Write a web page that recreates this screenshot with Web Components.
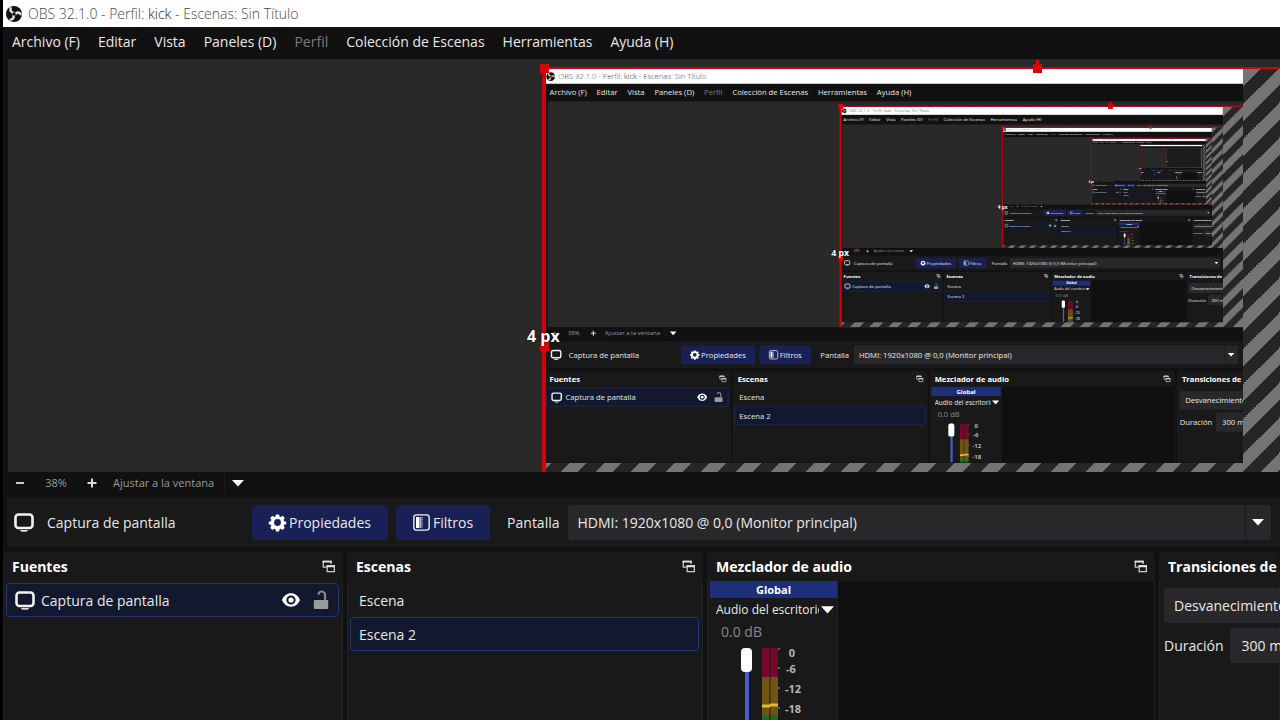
<!DOCTYPE html>
<html lang="es">
<head>
<meta charset="utf-8">
<meta name="viewport" content="width=device-width, initial-scale=1">
<title>OBS 32.1.0 - Perfil: kick - Escenas: Sin Título</title>
<style>
  html, body { height: 100%; }
  body {
    margin: 0;
    background: #000;
    overflow: hidden;
  }
</style>
</head>
<body>
<obs-window depth="5"></obs-window>

<script>
const html = (strings, ...expressions) => {
  const template = document.createElement('template')
  template.innerHTML = strings.reduce((result, str, i) => result + str + (expressions[i] ?? ''), '')
  return template
}

/** Base class: opens a shadow root and clones the static template into it. */
class ObsElement extends HTMLElement {
  constructor() {
    super()
    this.attachShadow({ mode: 'open' })
    this.shadowRoot.appendChild(document.importNode(this.constructor.template.content, true))
  }

  $(selector) {
    return this.shadowRoot.querySelector(selector)
  }
}

/** Icons, picked with the name attribute. */
class ObsIcon extends ObsElement {
  static template = html`
    <style>
      :host { display: inline-flex; width: 20px; height: 20px; flex: none; }
      svg { width: 100%; height: 100%; display: block; overflow: visible; }
    </style>
    <svg viewBox="0 0 20 20" aria-hidden="true"></svg>
  `

  static shapes = {
    logo: `<circle cx="10" cy="10" r="10" fill="#111"/>
      <g fill="none" stroke="#e4e4e4" stroke-width="3" stroke-linecap="round">
        <path d="M10 9C6 8 4.500 5.500 6 2.800"/>
        <path d="M10 9C6 8 4.500 5.500 6 2.800" transform="rotate(120 10 10)"/>
        <path d="M10 9C6 8 4.500 5.500 6 2.800" transform="rotate(240 10 10)"/>
      </g><circle cx="10" cy="10" r="2.200" fill="#111"/>`,
    display: `<rect x="1.500" y="2.500" width="17" height="13.500" rx="3" fill="none" stroke="#f2f2f2" stroke-width="2.600"/>
      <path d="M5.500 18h9l-2 1.800h-5z" fill="#d8d8d8"/>`,
    gear: `<path fill="#fff" fill-rule="evenodd" d="M8.200.5h3.600l.6 2.500 1.500.6 2.200-1.400 2.500 2.500-1.400 2.200.6 1.500 2.500.6v3l-2.500.6-.6 1.500 1.400 2.200-2.500 2.500-2.200-1.400-1.500.6-.6 2.500H8.200l-.6-2.500-1.500-.6-2.200 1.400-2.500-2.500 1.400-2.200-.6-1.500-2.500-.6v-3l2.500-.6.600-1.500L1.400 4.700l2.500-2.500 2.200 1.400 1.500-.6zM10 6a4 4 0 100 8 4 4 0 000-8z"/>`,
    filter: `<rect x="1" y="1" width="18" height="18" rx="3" fill="none" stroke="#f2f2f2" stroke-width="1.600"/>
      <path d="M3.500 3.500h4v13h-4z" fill="#fff"/><path d="M7.500 3.500h2v13h-2z" fill="#a9aec8"/>
      <path d="M10.500 3.500v13" stroke="#c7cbe0" stroke-width="1.500" stroke-dasharray="1.500 1"/>`,
    eye: `<path fill="#fff" fill-rule="evenodd" d="M0 10C2 5.400 5.500 2.600 10 2.600S18 5.400 20 10c-2 4.600-5.500 7.400-10 7.400S2 14.600 0 10zM10 4.900a5.100 5.100 0 100 10.200 5.100 5.100 0 000-10.200z"/>
      <circle cx="10" cy="10" r="2.900" fill="#fff"/>`,
    unlock: `<rect x="2" y="10" width="16" height="10" rx="1.500" fill="#9b9b9b"/>
      <path d="M14.500 10V4.500a3.700 3.700 0 00-7.400-.5" fill="none" stroke="#8b8b8b" stroke-width="2.400"/>`,
    popout: `<g fill="none" stroke="#c9c9c9" stroke-width="2"><path d="M7 11H2V2h12v4"/><path d="M8 9h11v9H8z"/></g>
      <path d="M1 1h14v3H1zM7 8h13v3H7z" fill="#e6e6e6"/>`,
    minus: `<path d="M2 10h16" stroke="#ccc" stroke-width="4"/>`,
    plus: `<path d="M1 10h18M10 1v18" stroke="#d8d8d8" stroke-width="4"/>`,
    arrow: `<path d="M0 5h20L10 16z" fill="#fff"/>`
  }

  connectedCallback() {
    this.$('svg').innerHTML = ObsIcon.shapes[this.getAttribute('name')]
  }
}

/** Drop-down: a real select with its own arrow drawn over the right end. */
class ObsSelect extends ObsElement {
  static template = html`
    <style>
      :host { display: grid; min-width: 0; }
      select, obs-icon { grid-area: 1 / 1; }
      select {
        appearance: none;
        box-sizing: border-box;
        width: 100%;
        height: 35px;
        padding: 0 32px 0 10px;
        border: 0;
        border-radius: 4px;
        background: linear-gradient(#1b1b1c, #1b1b1c) right 25px top / 1px 100% no-repeat #28282a;
        color: inherit;
        font: inherit;
      }
      obs-icon {
        width: 12px;
        height: 12px;
        margin-right: 7px;
        place-self: center end;
        pointer-events: none;
      }
      :host([flat]) select {
        height: 20px;
        padding: 0 30px 0 0;
        background: linear-gradient(#1c1c1c, #1c1c1c) right 26px top / 1px 100% no-repeat #111;
      }
    </style>
    <select><option></option></select>
    <obs-icon name="arrow"></obs-icon>
  `

  connectedCallback() {
    this.$('option').textContent = this.getAttribute('value')
    this.$('select').setAttribute('aria-label', this.getAttribute('label'))
  }
}

class ObsTitleBar extends ObsElement {
  static template = html`
    <style>
      :host {
        display: flex;
        align-items: center;
        gap: 6px;
        height: 27px;
        padding-left: 3px;
        background: #fff;
        color: #4a4a4a;
        font-size: 14px;
        font-weight: 300;
        white-space: pre;
      }
      obs-icon { width: 16px; height: 16px; }
      span { color: #222; }
    </style>
    <obs-icon name="logo"></obs-icon>
    <div>OBS 32.1.0 - Perfil: <span>kick</span> - Escenas: Sin Título</div>
  `
}

class ObsMenuBar extends ObsElement {
  static template = html`
    <style>
      :host { display: block; }
      nav {
        display: flex;
        align-items: center;
        gap: 18px;
        height: 32px;
        padding: 0 9px 4px;
        box-sizing: border-box;
      }
      button {
        padding: 0;
        border: 0;
        background: none;
        color: inherit;
        font: inherit;
        white-space: nowrap;
      }
      button:disabled { color: #7c7c7c; }
    </style>
    <nav aria-label="Menú">
      <button>Archivo (F)</button>
      <button>Editar</button>
      <button>Vista</button>
      <button>Paneles (D)</button>
      <button disabled>Perfil</button>
      <button>Colección de Escenas</button>
      <button>Herramientas</button>
      <button>Ayuda (H)</button>
    </nav>
  `
}

/**
 * Preview canvas with the selected display capture. The capture shows the
 * window itself, so it nests until the depth attribute runs out.
 */
class ObsPreview extends ObsElement {
  static template = html`
    <style>
      :host {
        display: block;
        position: relative;
        overflow: hidden;
        background: #29292a;
      }
      .item {
        position: absolute;
        inset: 10px 0 0 535px;
        background: linear-gradient(135deg, #747474 25%, #262627 25% 50%, #747474 50% 75%, #262627 75%) 0 0 / 35px 35px;
      }
      .capture { display: block; width: 95%; background: #1c1c1d; }
      .frame {
        position: absolute;
        inset: -2px -4px -4px -1px;
        border: solid #d0000e;
        border-width: 2px 4px 4px;
      }
      .handle {
        position: absolute;
        width: 9px;
        height: 9px;
        background: #e0000c;
      }
      .corner { left: -3px; top: -5px; }
      .top { left: 490px; top: -5px; }
      .top::before {
        content: '';
        position: absolute;
        left: 3px;
        top: -4px;
        width: 3px;
        height: 4px;
        background: inherit;
      }
      .left { left: -3px; top: 273px; }
      .distance {
        position: absolute;
        left: -16px;
        top: 256px;
        color: #fff;
        font-size: 16px;
        font-weight: 700;
        line-height: 22px;
        text-shadow: 0 0 2px #000;
        white-space: nowrap;
      }
    </style>
    <div class="item">
      <svg class="capture" viewBox="0 0 1280 720">
        <foreignObject width="1280" height="720"></foreignObject>
      </svg>
      <div class="frame"></div>
      <div class="handle corner"></div>
      <div class="handle top"></div>
      <div class="handle left"></div>
      <div class="distance">4 px</div>
    </div>
  `

  /** Fill the capture with a nested window. */
  set depth(depth) {
    if (depth < 1) return
    const inner = document.createElement('obs-window')
    inner.setAttribute('depth', depth - 1)
    inner.inert = true
    this.$('foreignObject').replaceChildren(inner)
  }
}

class ObsZoomBar extends ObsElement {
  static template = html`
    <style>
      :host {
        display: flex;
        align-items: center;
        height: 25px;
        padding: 0 0 4px 12px;
        box-sizing: border-box;
        color: #9a9a9a;
        font-size: 11px;
      }
      button { display: flex; padding: 0; border: 0; background: none; }
      button obs-icon { width: 10px; height: 10px; }
      output { width: 62px; text-align: center; }
      obs-select { width: 138px; margin-left: 16px; }
    </style>
    <button aria-label="Alejar"><obs-icon name="minus"></obs-icon></button>
    <output>38%</output>
    <button aria-label="Acercar"><obs-icon name="plus"></obs-icon></button>
    <obs-select flat label="Escala" value="Ajustar a la ventana"></obs-select>
  `
}

class ObsSourceToolbar extends ObsElement {
  static template = html`
    <style>
      :host {
        display: flex;
        align-items: center;
        gap: 8px;
        height: 50px;
        padding: 0 9px 0 7px;
        box-sizing: border-box;
        background: #191919;
      }
      .name { width: 197px; margin-left: 5px; white-space: nowrap; }
      button {
        display: flex;
        align-items: center;
        justify-content: center;
        gap: 3px;
        height: 35px;
        padding: 0 17px;
        border: 0;
        border-radius: 4px;
        background: #192056;
        color: inherit;
        font: inherit;
      }
      button obs-icon { width: 17px; height: 17px; }
      .label { margin-left: 9px; }
      obs-select { flex: 1; }
    </style>
    <obs-icon name="display"></obs-icon>
    <div class="name">Captura de pantalla</div>
    <button><obs-icon name="gear"></obs-icon>Propiedades</button>
    <button><obs-icon name="filter"></obs-icon>Filtros</button>
    <div class="label">Pantalla</div>
    <obs-select label="Pantalla" value="HDMI: 1920x1080 @ 0,0 (Monitor principal)"></obs-select>
  `
}

/** Dock panel with a bold header; its content is slotted in. */
class ObsDock extends ObsElement {
  static template = html`
    <style>
      :host {
        display: flex;
        flex-direction: column;
        min-width: 0;
        min-height: 0;
        overflow: hidden;
        background: #191919;
        border-radius: 4px 4px 0 0;
      }
      header {
        display: flex;
        align-items: center;
        justify-content: space-between;
        flex: none;
        height: 29px;
        padding: 0 8px 0 9px;
      }
      h2 { margin: 0; font-size: 14px; font-weight: 700; color: #fff; white-space: nowrap; }
      button { display: flex; padding: 0; border: 0; background: none; }
      obs-icon { width: 13px; height: 13px; }
      .body {
        flex: 1;
        min-height: 0;
        box-sizing: border-box;
        border: solid #222;
        border-width: 0 1px;
        padding: 2px 3px 0 2px;
      }
      :host([flush]) .body { padding: 0 0 0 2px; }
    </style>
    <header>
      <h2></h2>
      <button aria-label="Separar panel"><obs-icon name="popout"></obs-icon></button>
    </header>
    <div class="body"><slot></slot></div>
  `

  connectedCallback() {
    this.$('h2').textContent = this.getAttribute('heading')
  }
}

class ObsRow extends ObsElement {
  static template = html`
    <style>
      :host {
        display: flex;
        align-items: center;
        gap: 6px;
        height: 34px;
        padding: 0 8px;
        box-sizing: border-box;
        border: 1px solid transparent;
        border-radius: 4px;
      }
      :host([selected]) { background: #12182e; border-color: #28356f; }
    </style>
    <slot></slot>
  `
}

/** One mixer strip: fader, stereo meter and dB scale. */
class ObsMixer extends ObsElement {
  static template = html`
    <style>
      :host { display: flex; height: 100%; background: #101010; }
      .strip {
        width: 127px;
        border-right: 1px solid #242424;
        background: #191919;
      }
      .group {
        height: 17px;
        background: #1d2f78;
        color: #fff;
        font-size: 11px;
        font-weight: 700;
        line-height: 17px;
        text-align: center;
      }
      .source {
        display: flex;
        align-items: center;
        gap: 2px;
        width: 100%;
        height: 22px;
        padding: 0 3px 0 6px;
        border: 0;
        background: none;
        color: inherit;
        font: inherit;
        font-size: 12px;
      }
      .source span { flex: 1; overflow: hidden; white-space: nowrap; text-align: left; }
      .source obs-icon { width: 13px; height: 13px; }
      .level { padding-left: 11px; color: #8a8a8a; font-size: 14px; line-height: 24px; }
      .meters { display: flex; gap: 10px; padding: 4px 0 0 31px; }
      input {
        appearance: none;
        writing-mode: vertical-lr;
        direction: rtl;
        width: 11px;
        height: 160px;
        margin: 0;
        background: linear-gradient(#4a60c8, #4a60c8) center / 4px 100% no-repeat;
      }
      input::-webkit-slider-thumb {
        appearance: none;
        width: 11px;
        height: 24px;
        border-radius: 4px;
        background: #fff;
      }
      svg { display: block; width: 56px; height: 160px; }
      text { font-size: 11px; font-weight: 700; fill: #b4b4b4; text-anchor: middle; }
    </style>
    <div class="strip">
      <div class="group">Global</div>
      <button class="source"><span>Audio del escritorio</span><obs-icon name="arrow"></obs-icon></button>
      <div class="level">0.0 dB</div>
      <div class="meters">
        <input type="range" aria-label="Volumen" value="100">
        <svg viewBox="0 0 56 160">
          <path d="M0 0h16v29H0z" fill="#740a2b"/>
          <path d="M0 29h16v38H0z" fill="#6e5612"/>
          <path d="M0 67h16v93H0z" fill="#1c6b22"/>
          <path d="M8 0v160" stroke="#2a1512"/>
          <path d="M0 58h8M8 57h8" stroke="#e6bd2e" stroke-width="3"/>
          <path d="M16 1h2M16 20h2M16 40h2M16 60h2" stroke="#aaa"/>
          <text x="30" y="9">0</text>
          <text x="29" y="25">-6</text>
          <text x="31" y="45">-12</text>
          <text x="31" y="65">-18</text>
        </svg>
      </div>
    </div>
  `
}

class ObsTransitions extends ObsElement {
  static template = html`
    <style>
      :host { display: grid; gap: 5px; width: 240px; padding: 5px 0 0 2px; }
      label { display: flex; align-items: center; gap: 6px; }
      input {
        flex: 1;
        min-width: 0;
        height: 35px;
        padding: 0 12px;
        box-sizing: border-box;
        border: 0;
        border-radius: 4px;
        background: #28282a;
        color: inherit;
        font: inherit;
      }
    </style>
    <obs-select label="Transición" value="Desvanecimiento"></obs-select>
    <label>Duración <input value="300 ms"></label>
  `
}

class ObsWindow extends ObsElement {
  static template = html`
    <style>
      :host {
        display: flex;
        flex-direction: column;
        height: 100%;
        box-sizing: border-box;
        border-left: 3px solid #000;
        overflow: hidden;
        background: #111;
        color: #e8e8e8;
        font-family: 'Open Sans', 'Noto Sans', sans-serif;
        font-size: 14px;
      }
      obs-preview { flex: 1; margin-left: 5px; }
      obs-source-toolbar { margin-left: 4px; }
      .docks {
        flex: 0 0 168px;
        min-height: 0;
        display: grid;
        grid-template: minmax(0, 1fr) / 340fr 356fr 448fr 121fr;
        gap: 4px;
        margin-top: 5px;
      }
      .name { flex: 1; }
      .lock { margin-left: 6px; }
      .small { width: 18px; height: 18px; }
    </style>
    <obs-title-bar></obs-title-bar>
    <obs-menu-bar></obs-menu-bar>
    <obs-preview></obs-preview>
    <obs-zoom-bar></obs-zoom-bar>
    <obs-source-toolbar></obs-source-toolbar>
    <div class="docks">
      <obs-dock heading="Fuentes">
        <obs-row selected>
          <obs-icon name="display"></obs-icon>
          <span class="name">Captura de pantalla</span>
          <obs-icon class="small" name="eye"></obs-icon>
          <obs-icon class="small lock" name="unlock"></obs-icon>
        </obs-row>
      </obs-dock>
      <obs-dock heading="Escenas">
        <obs-row>Escena</obs-row>
        <obs-row selected>Escena 2</obs-row>
      </obs-dock>
      <obs-dock heading="Mezclador de audio" flush>
        <obs-mixer></obs-mixer>
      </obs-dock>
      <obs-dock heading="Transiciones de escena">
        <obs-transitions></obs-transitions>
      </obs-dock>
    </div>
  `

  connectedCallback() {
    this.$('obs-preview').depth = Number(this.getAttribute('depth'))
  }
}

customElements.define('obs-icon', ObsIcon)
customElements.define('obs-select', ObsSelect)
customElements.define('obs-title-bar', ObsTitleBar)
customElements.define('obs-menu-bar', ObsMenuBar)
customElements.define('obs-preview', ObsPreview)
customElements.define('obs-zoom-bar', ObsZoomBar)
customElements.define('obs-source-toolbar', ObsSourceToolbar)
customElements.define('obs-dock', ObsDock)
customElements.define('obs-row', ObsRow)
customElements.define('obs-mixer', ObsMixer)
customElements.define('obs-transitions', ObsTransitions)
customElements.define('obs-window', ObsWindow)
</script>
</body>
</html>
